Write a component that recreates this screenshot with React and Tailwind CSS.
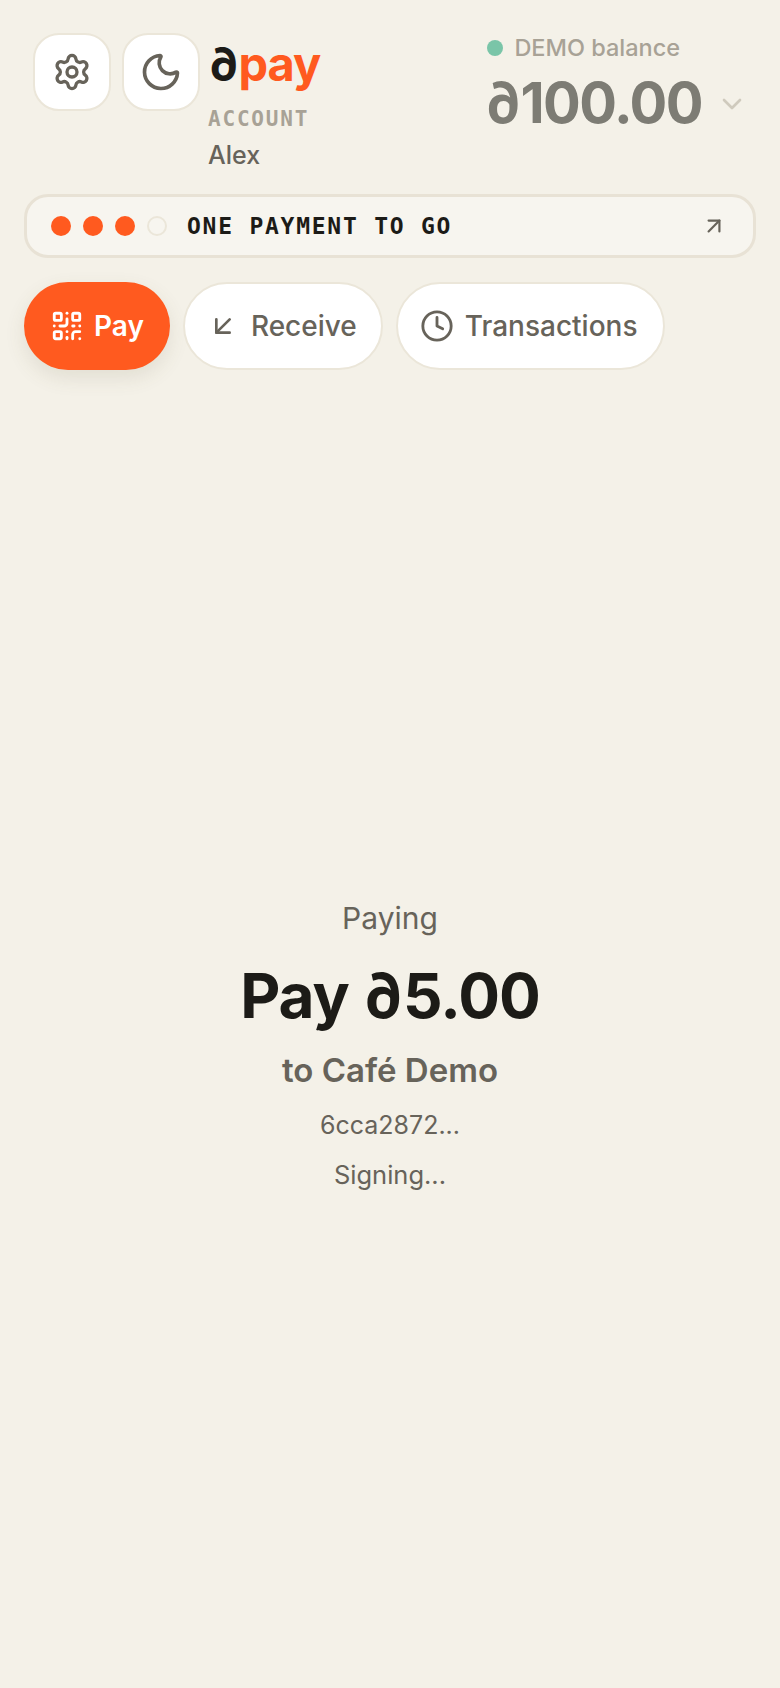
import React from 'react';
import { Settings, Moon, QrCode, ArrowDownLeft, ArrowUpRight, Clock, ChevronDown } from 'lucide-react';

const sans = "font-['Inter',sans-serif]";
const mono = "font-['DejaVu_Sans_Mono',monospace]";

function IconButton({ children }) {
    return (
        <button className="flex items-center justify-center w-[78px] h-[78px] bg-white border-2 border-[#ebe6d9] rounded-[26px] text-[#67635a]">
            {children}
        </button>
    );
}

function Tab({ active, icon, label, className }) {
    return (
        <button className={`flex items-center h-[88px] rounded-full text-[28px] font-medium ${active ? 'bg-[#ff5a1f] text-white font-semibold shadow-[0_8px_20px_rgba(100,90,60,0.12)]' : 'bg-white text-[#67635a] border-2 border-[#ebe6d9]'} ${className}`}>
            {icon}
            {label}
        </button>
    );
}

export default function App() {
    return (
        <div className={`${sans} min-h-[1688px] bg-[#f4f1e8] flex flex-col`}>
            <header className="flex justify-between pl-[33px] pr-[32px] pt-[33px]">
                <div className="flex gap-[11px]">
                    <IconButton><Settings size={40} strokeWidth={2} /></IconButton>
                    <IconButton><Moon size={44} strokeWidth={2} /></IconButton>
                    <div className="flex flex-col -ml-[3px]">
                        <div className="text-[47px] leading-[56px] font-bold tracking-[-1px] h-[64px] pt-[3px]">
                            <span className="text-[#1c1b17]">∂</span><span className="text-[#ff5a1f]">pay</span>
                        </div>
                        <div className={`${mono} text-[21px] leading-[26px] font-bold tracking-[1.8px] text-[#a8a296] mt-[9px]`}>ACCOUNT</div>
                        <div className="text-[25px] leading-[30px] font-medium text-[#67635a] mt-[8px]">Alex</div>
                    </div>
                </div>
                <div className="flex flex-col">
                    <div className="flex items-center gap-[11px] pl-[3px] pt-[1px] text-[23.5px] leading-[28px] font-medium text-[#a8a296]">
                        <span className="w-4 h-4 rounded-full bg-[#7ac5a8]" />
                        DEMO balance
                    </div>
                    <div className="flex items-center gap-[14px] mt-[6px]">
                        <span className="text-[56px] leading-[70px] font-bold tracking-[-1.5px] text-[#7d7c74]">∂100.00</span>
                        <ChevronDown size={32} strokeWidth={2} className="text-[#cfcabd] mt-[2px]" />
                    </div>
                </div>
            </header>

            <div className="mx-6 mt-[24px] h-[64px] flex items-center justify-between pl-[24px] pr-[26px] bg-[#f7f5ef] border-[3px] border-[#e8e2d5] rounded-[24px]">
                <div className="flex items-center">
                    <div className="flex gap-3">
                        <span className="w-5 h-5 rounded-full bg-[#ff5a1f]" />
                        <span className="w-5 h-5 rounded-full bg-[#ff5a1f]" />
                        <span className="w-5 h-5 rounded-full bg-[#ff5a1f]" />
                        <span className="w-5 h-5 rounded-full border-2 border-[#ebe6d9]" />
                    </div>
                    <span className={`${mono} ml-5 text-[23px] font-bold tracking-[1.75px] text-[#1c1b17]`}>ONE PAYMENT TO GO</span>
                </div>
                <ArrowUpRight size={26} strokeWidth={2} className="text-[#67635a]" />
            </div>

            <nav className="flex gap-[13px] px-6 mt-[24px]">
                <Tab active className="pl-[26px] pr-[26px] gap-[10px]" icon={<QrCode size={34} strokeWidth={2} />} label="Pay" />
                <Tab className="pl-[22px] pr-6 gap-[12px]" icon={<ArrowDownLeft size={32} strokeWidth={2} />} label="Receive" />
                <Tab className="pl-[22px] pr-[26px] gap-[11px]" icon={<Clock size={34} strokeWidth={2} />} label="Transactions" />
            </nav>

            <main className="flex-1 flex flex-col items-center justify-center pt-[33px] text-center">
                <div className="text-[30px] leading-[40px] text-[#67635a]">Paying</div>
                <div className="text-[62px] leading-[80px] font-bold tracking-[-1px] text-[#1c1b17] mt-[18px]">Pay ∂5.00</div>
                <div className="text-[33px] leading-[40px] font-semibold text-[#67635a] mt-[14px]">to Café Demo</div>
                <div className="text-[25px] leading-[36px] text-[#67635a] mt-[17px]">6cca2872...</div>
                <div className="text-[25.5px] leading-[36px] text-[#67635a] mt-[14px]">Signing...</div>
            </main>
        </div>
    );
}
